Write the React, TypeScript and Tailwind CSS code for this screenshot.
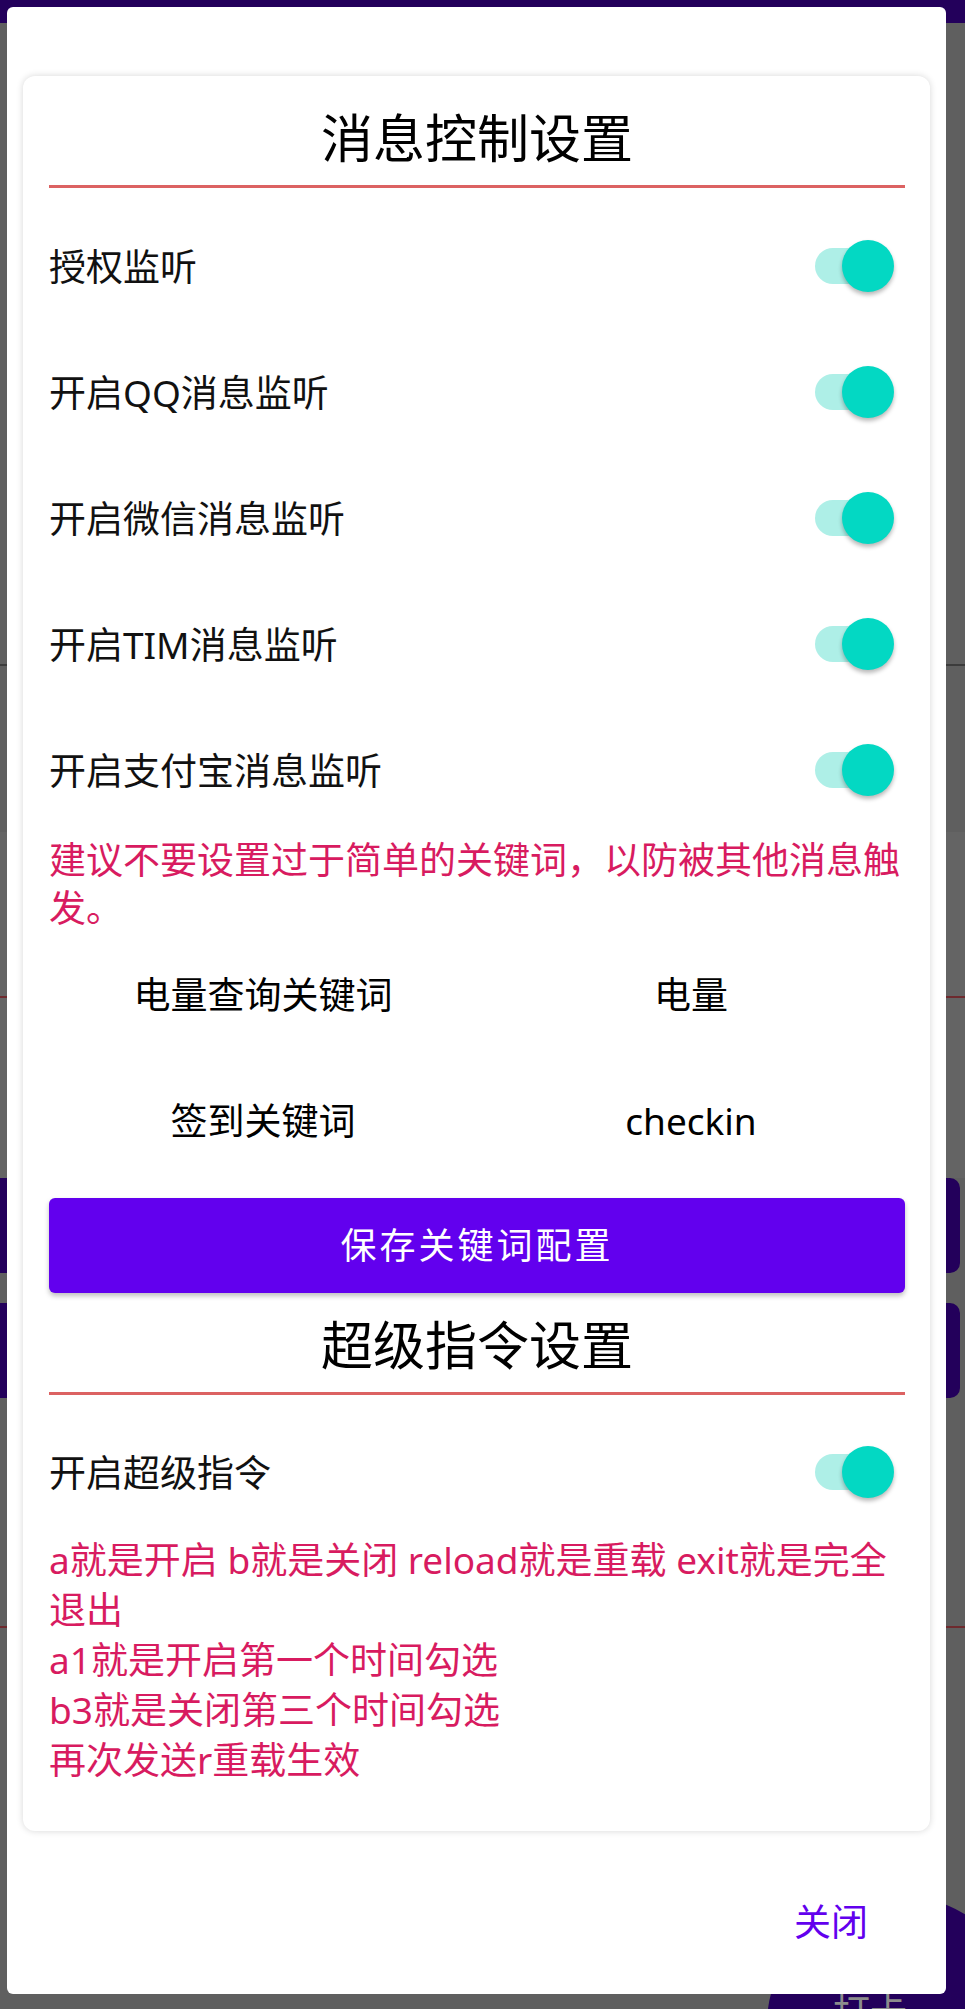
import React from "react";

const FONT = { fontFamily: '"Noto Sans", "Noto Sans CJK SC", sans-serif' };

function Switch() {
  return (
    <div className="relative w-[79px] h-[52px] mr-[11px] shrink-0">
      <div className="absolute left-0 top-[8px] w-[72px] h-[36px] rounded-full bg-[#aeefe7]" />
      <div className="absolute right-0 top-0 w-[52px] h-[52px] rounded-full bg-[#03d8c3] shadow-[0_3px_4px_rgba(0,0,0,0.28)]" />
    </div>
  );
}

function Row({ label }: { label: string }) {
  return (
    <div className="h-[126px] flex items-center justify-between">
      <span className="text-[37px] leading-none text-[#111]">{label}</span>
      <Switch />
    </div>
  );
}

function Title({ text, className = "" }: { text: string; className?: string }) {
  return (
    <div className={`flex flex-col gap-[12px] ${className}`}>
      <div className="h-[70px] leading-[70px] text-[52px] text-center text-black">{text}</div>
      <div className="h-[3px] bg-[#dc6262]" />
    </div>
  );
}

function Backdrop() {
  return (
    <div className="relative h-[2009px] flex flex-col bg-[#5f5f5f]">
      <div className="h-[23px] bg-[#23005b]" />
      <div className="h-[641px]" />
      <div className="h-[2px] bg-[#3c3c3c]" />
      <div className="h-[166px]" />
      <div className="h-[346px] bg-[#646464] flex flex-col">
        <div className="h-[164px]" />
        <div className="h-[2px] bg-[#6e2a2e]" />
      </div>
      <div className="flex flex-col gap-[30px] ml-[-10px] mr-[5px]">
        <div className="h-[95px] rounded-[10px] bg-[#23005b]" />
        <div className="h-[95px] rounded-[10px] bg-[#23005b]" />
      </div>
      <div className="h-[228px]" />
      <div className="h-[2px] bg-[#6e2a2e]" />
      {/* floating action button */}
      <div className="absolute left-[767px] top-[1895px] w-[260px] h-[260px] rounded-full bg-[#23005b]">
        <div className="pt-[98px] pl-[66px] text-[37px] leading-none text-[#8c8c8c]">打卡</div>
      </div>
    </div>
  );
}

export default function App() {
  return (
    <div className="relative w-[965px] h-[2009px] overflow-hidden" style={FONT}>
      <Backdrop />

      {/* dialog over the dimmed app */}
      <div className="absolute top-[7px] left-[7px] w-[939px] h-[1987px] bg-white rounded-[6px] flex flex-col">
        <div className="mt-[69px] mx-[16px] rounded-[12px] bg-white shadow-[0_0_7px_rgba(0,0,0,0.16)] pt-[27px] pl-[26px] pr-[25px] pb-[46px] flex flex-col">
          <Title text="消息控制设置" />
          <div className="mt-[15px] flex flex-col">
            <Row label="授权监听" />
            <Row label="开启QQ消息监听" />
            <Row label="开启微信消息监听" />
            <Row label="开启TIM消息监听" />
            <Row label="开启支付宝消息监听" />
          </div>
          <p className="mt-[3px] text-[37px] leading-[48px] text-[#d81b60]">
            建议不要设置过于简单的关键词，以防被其他消息触发。
          </p>
          <div className="grid grid-cols-2 auto-rows-[126px] items-center justify-items-center text-[37px] text-black">
            <div>电量查询关键词</div>
            <div>电量</div>
            <div>签到关键词</div>
            <div>checkin</div>
          </div>
          <button className="mt-[14px] w-full h-[95px] rounded-[6px] bg-[#6200ee] text-white text-[36px] tracking-[3px] shadow-[0_3px_5px_rgba(0,0,0,0.25)] flex items-center justify-center">
            保存关键词配置
          </button>
          <Title text="超级指令设置" className="mt-[17px]" />
          <div className="mt-[14px] flex flex-col">
            <Row label="开启超级指令" />
          </div>
          <div className="text-[37px] leading-[50px] text-[#d81b60]">
            <div>a就是开启 b就是关闭 reload就是重载 exit就是完全</div>
            <div>退出</div>
            <div>a1就是开启第一个时间勾选</div>
            <div>b3就是关闭第三个时间勾选</div>
            <div>再次发送r重载生效</div>
          </div>
        </div>
        <div className="flex justify-end mt-[72px] mr-[57px]">
          <button className="px-[21px] h-[37px] leading-[37px] text-[37px] text-[#6200ee]">关闭</button>
        </div>
      </div>
    </div>
  );
}
